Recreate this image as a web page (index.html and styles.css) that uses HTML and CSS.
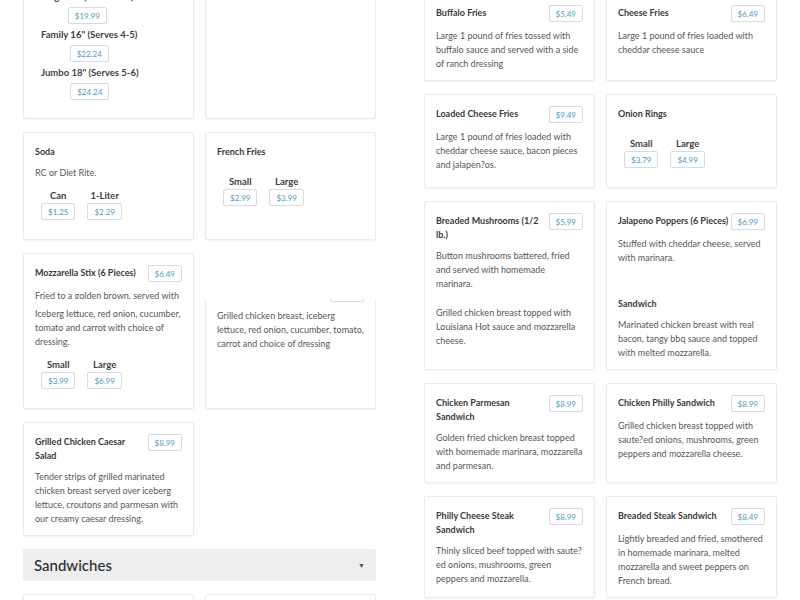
FILE: index.html
```html
<!DOCTYPE html>
<html lang="en">
<head>
<meta charset="utf-8">
<title>Menu</title>
<link rel="stylesheet" href="styles.css">
</head>
<body>
<div class="shot">
  <section class="slice slice-a">
    <div class="page">
      <div class="col col-l">
        <div class="row">
          <div class="card">
            <ul class="sizes stack">
              <li><span class="lbl">Large 14" (Serves 3-4)</span><span class="price">$19.99</span></li>
              <li><span class="lbl">Family 16" (Serves 4-5)</span><span class="price">$22.24</span></li>
              <li><span class="lbl">Jumbo 18" (Serves 5-6)</span><span class="price">$24.24</span></li>
            </ul>
          </div>
          <div class="card"></div>
        </div>
        <div class="row">
          <div class="card">
            <div class="head"><h3 class="title">Soda</h3></div>
            <p class="desc">RC or Diet Rite.</p>
            <ul class="sizes">
              <li><span class="lbl">Can</span><span class="price">$1.25</span></li>
              <li><span class="lbl">1-Liter</span><span class="price">$2.29</span></li>
            </ul>
          </div>
          <div class="card">
            <div class="head"><h3 class="title">French Fries</h3></div>
            <ul class="sizes">
              <li><span class="lbl">Small</span><span class="price">$2.99</span></li>
              <li><span class="lbl">Large</span><span class="price">$3.99</span></li>
            </ul>
          </div>
        </div>
        <div class="row">
          <div class="card">
            <div class="head"><h3 class="title">Mozzarella Stix (6 Pieces)</h3><span class="price">$6.49</span></div>
            <p class="desc">Fried to a golden brown, served with marinara.</p>
          </div>
        </div>
      </div>
      <div class="col col-r">
        <div class="row">
          <div class="card">
            <div class="head"><h3 class="title">Buffalo Fries</h3><span class="price">$5.49</span></div>
            <p class="desc">Large 1 pound of fries tossed with buffalo sauce and served with a side of ranch dressing</p>
          </div>
          <div class="card">
            <div class="head"><h3 class="title">Cheese Fries</h3><span class="price">$6.49</span></div>
            <p class="desc">Large 1 pound of fries loaded with cheddar cheese sauce</p>
          </div>
        </div>
        <div class="row">
          <div class="card">
            <div class="head"><h3 class="title">Loaded Cheese Fries</h3><span class="price">$9.49</span></div>
            <p class="desc">Large 1 pound of fries loaded with cheddar cheese sauce, bacon pieces and jalapen?os.</p>
          </div>
          <div class="card">
            <div class="head"><h3 class="title">Onion Rings</h3></div>
            <ul class="sizes">
              <li><span class="lbl">Small</span><span class="price">$3.79</span></li>
              <li><span class="lbl">Large</span><span class="price">$4.99</span></li>
            </ul>
          </div>
        </div>
        <div class="row">
          <div class="card">
            <div class="head"><h3 class="title">Breaded Mushrooms (1/2 lb.)</h3><span class="price">$5.99</span></div>
            <p class="desc">Button mushrooms battered, fried and served with homemade marinara.</p>
          </div>
          <div class="card">
            <div class="head"><h3 class="title">Jalapeno Poppers (6 Pieces)</h3><span class="price">$6.99</span></div>
            <p class="desc">Stuffed with cheddar cheese, served with marinara.</p>
          </div>
        </div>
      </div>
    </div>
  </section>

  <section class="slice slice-b">
    <div class="page">
      <div class="col col-l">
        <div class="row">
          <div class="card">
            <div class="head"><h3 class="title">Tossed Salad</h3></div>
            <p class="desc">Iceberg lettuce, red onion, cucumber, tomato and carrot with choice of dressing.</p>
            <ul class="sizes">
              <li><span class="lbl">Small</span><span class="price">$3.99</span></li>
              <li><span class="lbl">Large</span><span class="price">$6.99</span></li>
            </ul>
          </div>
          <div class="card">
            <div class="head"><h3 class="title">Chicken Salad</h3><span class="price">$7.99</span></div>
            <p class="desc">Grilled chicken breast, iceberg lettuce, red onion, cucumber, tomato, carrot and choice of dressing</p>
          </div>
        </div>
        <div class="row">
          <div class="card">
            <div class="head"><h3 class="title">Grilled Chicken Caesar Salad</h3><span class="price">$8.99</span></div>
            <p class="desc">Tender strips of grilled marinated chicken breast served over iceberg lettuce, croutons and parmesan with our creamy caesar dressing.</p>
          </div>
        </div>
        <div class="section-head">
          <h2 class="section-title">Sandwiches</h2>
          <span class="caret">&#9660;</span>
        </div>
        <div class="row">
          <div class="card tall"></div>
          <div class="card tall"></div>
        </div>
      </div>
      <div class="col col-r">
        <div class="row">
          <div class="card">
            <div class="head"><h3 class="title">Buffalo Chicken</h3><span class="price">$8.49</span></div>
            <p class="desc">Grilled chicken breast topped with Louisiana Hot sauce and mozzarella cheese.</p>
          </div>
          <div class="card">
            <div class="head"><h3 class="title">Bacon BBQ Chicken Sandwich</h3><span class="price">$8.99</span></div>
            <p class="desc">Marinated chicken breast with real bacon, tangy bbq sauce and topped with melted mozzarella.</p>
          </div>
        </div>
        <div class="row">
          <div class="card">
            <div class="head"><h3 class="title">Chicken Parmesan Sandwich</h3><span class="price">$8.99</span></div>
            <p class="desc">Golden fried chicken breast topped with homemade marinara, mozzarella and parmesan.</p>
          </div>
          <div class="card">
            <div class="head"><h3 class="title">Chicken Philly Sandwich</h3><span class="price">$8.99</span></div>
            <p class="desc">Grilled chicken breast topped with saute?ed onions, mushrooms, green peppers and mozzarella cheese.</p>
          </div>
        </div>
        <div class="row">
          <div class="card">
            <div class="head"><h3 class="title">Philly Cheese Steak Sandwich</h3><span class="price">$8.99</span></div>
            <p class="desc">Thinly sliced beef topped with saute?ed onions, mushrooms, green peppers and mozzarella.</p>
          </div>
          <div class="card">
            <div class="head"><h3 class="title">Breaded Steak Sandwich</h3><span class="price">$8.49</span></div>
            <p class="desc">Lightly breaded and fried, smothered in homemade marinara, melted mozzarella and sweet peppers on French bread.</p>
          </div>
        </div>
      </div>
    </div>
  </section>
</div>
</body>
</html>
```

FILE: styles.css
```css
* { box-sizing: border-box; }

html, body {
  margin: 0;
  padding: 0;
  background: #ffffff;
}

body {
  font-family: Lato, "Open Sans", "Liberation Sans", sans-serif;
  color: #555555;
  width: 800px;
  height: 600px;
  overflow: hidden;
}

.shot {
  display: flex;
  flex-direction: column;
  width: 800px;
  height: 600px;
}

.slice {
  overflow: hidden;
  flex: none;
}

.slice-a { height: 299px; }
.slice-b { height: 301px; }

.page {
  display: grid;
  grid-template-columns: 353px 354px;
  column-gap: 48px;
  padding: 0 22px 0 23px;
  align-items: start;
}

.col {
  display: flex;
  flex-direction: column;
  gap: 13px;
}

.slice-a .col-l { margin-top: -23px; }
.slice-a .col-r { margin-top: -7px; }
.slice-b .col-l { margin-top: -26px; }
.slice-b .col-r { margin-top: -29px; }

.row {
  display: grid;
  grid-template-columns: 171px 171px;
  column-gap: 11px;
}

.card {
  display: flex;
  flex-direction: column;
  align-items: stretch;
  background: #ffffff;
  border: 1px solid #ebebeb;
  border-radius: 2px;
  box-shadow: 0 1px 2px rgba(0, 0, 0, 0.05);
  padding: 11px 11px 9px 11px;
  min-width: 0;
}

.card.tall { min-height: 120px; }

.head {
  display: flex;
  align-items: flex-start;
  justify-content: space-between;
  gap: 0;
  margin-bottom: 7px;
}

.title {
  margin: 0;
  padding-top: 1px;
  font-size: 9px;
  line-height: 14px;
  font-weight: 700;
  color: #3a3a3a;
  flex: 1 1 auto;
  min-width: 0;
}

.desc {
  margin: 0;
  font-size: 9px;
  line-height: 14px;
  color: #585858;
}

.price {
  flex: none;
  display: inline-flex;
  align-items: center;
  justify-content: center;
  height: 17px;
  padding: 0 6px;
  font-size: 8px;
  color: #4f9cc4;
  background: #ffffff;
  border: 1px solid #d6dcdf;
  border-radius: 2px;
}

.sizes {
  list-style: none;
  margin: 8px 0 10px 0;
  padding: 0 0 0 6px;
  display: flex;
  flex-wrap: wrap;
  column-gap: 12px;
  row-gap: 6px;
}

.sizes li {
  display: flex;
  flex-direction: column;
  align-items: center;
}

.sizes.stack {
  margin: 0 0 9px 0;
  flex-direction: column;
  align-items: flex-start;
  row-gap: 3px;
}

.lbl {
  padding-top: 1px;
  font-size: 9.5px;
  line-height: 14px;
  font-weight: 700;
  color: #3f3f3f;
  white-space: nowrap;
}

.stack .lbl { margin-bottom: 3px; }

.section-head {
  display: flex;
  align-items: center;
  justify-content: space-between;
  height: 32px;
  padding: 0 11px 0 11px;
  background: #eeeeee;
  border-radius: 2px;
}

.section-title {
  margin: 0;
  font-size: 15px;
  font-weight: 500;
  color: #2b2b2b;
}

.caret {
  font-size: 7px;
  color: #555555;
}
```
